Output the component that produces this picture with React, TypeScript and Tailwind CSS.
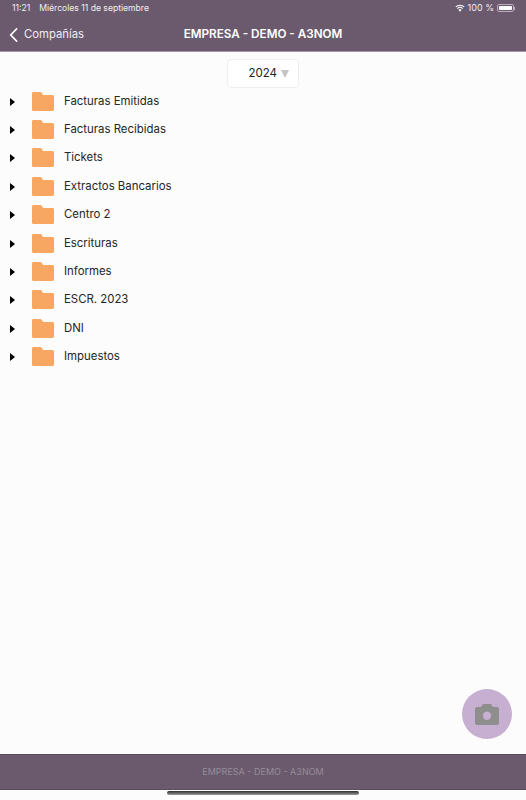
const folders = [
  "Facturas Emitidas",
  "Facturas Recibidas",
  "Tickets",
  "Extractos Bancarios",
  "Centro 2",
  "Escrituras",
  "Informes",
  "ESCR. 2023",
  "DNI",
  "Impuestos",
];

const FolderRow = ({ name }: { name: string }) => (
  <div className="flex h-[28.4px] items-center">
    <svg width="5" height="8" viewBox="0 0 5 8" className="ml-[10px] mt-[1px] shrink-0">
      <path d="M0 0 L5 4 L0 8 Z" fill="#000" />
    </svg>
    <svg width="22" height="19" viewBox="0 0 22 19" className="ml-[17px] shrink-0">
      <path
        d="M1.5 0 H8 C9 0 9.4 .4 10 1.2 L11.2 3 H20.5 C21.4 3 22 3.6 22 4.5 V17.5 C22 18.4 21.4 19 20.5 19 H1.5 C.6 19 0 18.4 0 17.5 V1.5 C0 .6 .6 0 1.5 0 Z"
        fill="#f8a762"
      />
    </svg>
    <span className="ml-[10px] text-[11.4px] text-[#262626]">{name}</span>
  </div>
);

export default function App() {
  return (
    <div className="relative flex h-[800px] w-[526px] flex-col overflow-hidden bg-[#fcfcfc] font-['Inter',sans-serif]">
      <div className="h-[52px] shrink-0 border-b border-[#a993a8] bg-[#6b5a6d] text-white">
        <div className="flex h-[16px] items-center justify-between pl-[12px] pr-[11px] text-[8.6px] text-[#f1edf1]">
          <div className="flex gap-[9px]">
            <span>11:21</span>
            <span>Miércoles 11 de septiembre</span>
          </div>
          <div className="flex items-center gap-[3px]">
            <svg width="10" height="8" viewBox="0 0 11 8">
              <path d="M5.5 8 L3.8 6 A2.5 2.5 0 0 1 7.2 6 Z" fill="#fff" />
              <path d="M2.6 4.6 A4.2 4.2 0 0 1 8.4 4.6" fill="none" stroke="#fff" strokeWidth="1.2" />
              <path d="M.9 2.8 A6.6 6.6 0 0 1 10.1 2.8" fill="none" stroke="#fff" strokeWidth="1.2" />
            </svg>
            <span className="text-[9px]">100 %</span>
            <div className="flex items-center">
              <div className="flex h-[8px] w-[17px] items-center rounded-[2px] border border-[#b9adba] p-[1px]">
                <div className="h-full w-full rounded-[1px] bg-white" />
              </div>
              <div className="h-[3px] w-[1px] bg-[#b9adba]" />
            </div>
          </div>
        </div>
        <div className="relative flex h-[35px] items-center justify-center pt-[2px]">
          <div className="absolute left-[9px] flex items-center gap-[6px]">
            <svg width="9" height="14" viewBox="0 0 9 14">
              <path d="M7.5 1 L1.8 7 L7.5 13" fill="none" stroke="#fff" strokeWidth="1.8" strokeLinecap="round" />
            </svg>
            <span className="text-[11.3px] text-[#f1edf1]">Compañías</span>
          </div>
          <span className="text-[11.7px] font-semibold">EMPRESA - DEMO - A3NOM</span>
        </div>
      </div>

      <div className="flex-1">
        <div className="mt-[7px] flex justify-center">
          <div className="flex h-[29px] w-[72px] items-center justify-end gap-[4px] rounded-[4px] border border-[#efefef] bg-white pr-[9px]">
            <span className="text-[11.5px] text-[#222]">2024</span>
            <svg width="8" height="8" viewBox="0 0 8 8">
              <path d="M0 0 H8 L4 8 Z" fill="#c4c4c4" />
            </svg>
          </div>
        </div>
        <div className="mt-[-1px]">
          {folders.map((f) => (
            <FolderRow key={f} name={f} />
          ))}
        </div>
      </div>

      <button className="absolute left-[462px] top-[689px] flex h-[50px] w-[50px] items-center justify-center rounded-full bg-[#c6afd0]">
        <svg width="24" height="21" viewBox="0 0 24 21">
          <path
            fillRule="evenodd"
            d="M8 0 H16 L18 3 H22 C23.2 3 24 3.8 24 5 V19 C24 20.2 23.2 21 22 21 H2 C.8 21 0 20.2 0 19 V5 C0 3.8 .8 3 2 3 H6 Z M12 7.5 A4.2 4.2 0 1 0 12 15.9 A4.2 4.2 0 1 0 12 7.5 Z"
            fill="#8e8e8e"
          />
        </svg>
      </button>

      <div className="flex h-[36px] shrink-0 items-center justify-center border-y border-[#5c4d5e] bg-[#6b5a6d] text-[9px] text-[#978c98]">
        EMPRESA - DEMO - A3NOM
      </div>
      <div className="flex h-[10px] shrink-0 items-start justify-center">
        <div className="mt-[1px] h-[4px] w-[192px] rounded-full bg-[linear-gradient(#2c2c2c,#9a9a9a)]" />
      </div>
    </div>
  );
}
